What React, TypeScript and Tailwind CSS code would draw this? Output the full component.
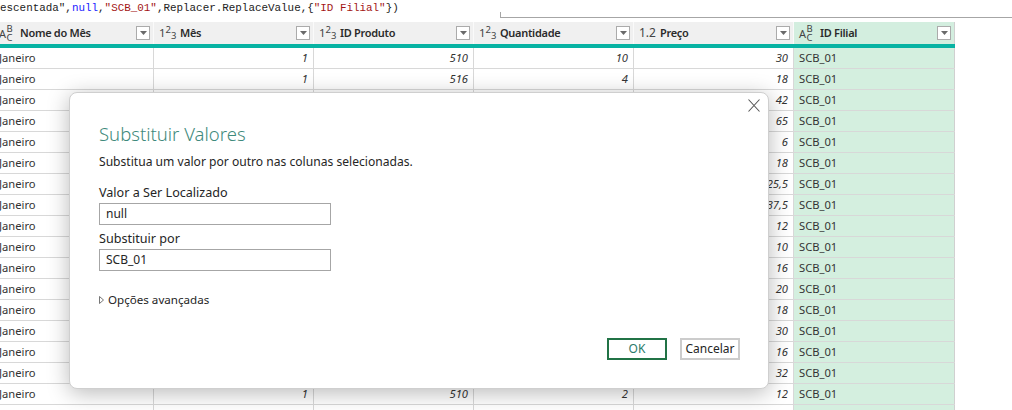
import React from "react";

const rows: string[][] = [
  ["1", "510", "10", "30"],
  ["1", "516", "4", "18"],
  ["1", "512", "6", "42"],
  ["1", "515", "5", "65"],
  ["1", "511", "3", "6"],
  ["1", "516", "4", "18"],
  ["1", "514", "3", "25,5"],
  ["1", "513", "5", "37,5"],
  ["1", "517", "2", "12"],
  ["1", "518", "1", "10"],
  ["1", "510", "2", "16"],
  ["1", "519", "4", "20"],
  ["1", "516", "4", "18"],
  ["1", "511", "3", "30"],
  ["1", "510", "2", "16"],
  ["1", "512", "4", "32"],
  ["1", "510", "2", "12"],
  ["", "", "", ""],
];

function Drop() {
  return (
    <div className="w-[14px] h-[14px] border border-[#ababab] bg-white flex items-center justify-center shrink-0">
      <svg width="7" height="4" viewBox="0 0 7 4">
        <path d="M0 0 L7 0 L3.5 4 Z" fill="#6a6a6a" />
      </svg>
    </div>
  );
}

function IconABC() {
  return (
    <span className="flex items-center w-[18px] text-[#444] leading-none">
      <span className="text-[11px] mt-[1px]">A</span>
      <span className="flex flex-col text-[9.5px] leading-[9px] ml-[0.5px]">
        <span>B</span>
        <span>C</span>
      </span>
    </span>
  );
}

function Icon123() {
  return (
    <span className="flex items-center w-[18px] text-[#444] leading-none text-[11.5px]">
      <span>1</span>
      <span className="text-[9.5px] -mt-[6px]">2</span>
      <span className="text-[9.5px] mt-[5px]">3</span>
    </span>
  );
}

function Icon12() {
  return <span className="flex items-center w-[18px] text-[#444] text-[12px] leading-none">1.2</span>;
}

function HeaderCell({ icon, label, green }: { icon: React.ReactNode; label: string; green?: boolean }) {
  return (
    <div
      className={
        green
          ? "w-[161px] h-[22px] flex items-center bg-[#d3eedf] border-r border-[#d0d0d0] pl-[5px] pr-[3px]"
          : "w-[160px] h-[22px] flex items-center bg-[#f0f0f0] border-r border-[#fafafa] pl-[5px] pr-[3px]"
      }
    >
      {icon}
      <span className="ml-[3px] flex-1 text-[11px] tracking-[-0.3px] font-semibold text-[#2b2b2b]">{label}</span>
      <Drop />
    </div>
  );
}

function NumCell({ v }: { v: string }) {
  return (
    <div className="w-[160px] h-full border-r border-[#d8d8d8] flex items-center justify-end pr-[5px] italic text-[#333]">
      {v}
    </div>
  );
}

export default function App() {
  return (
    <div
      className="relative w-[1012px] h-[410px] overflow-hidden bg-white text-[11.2px] text-[#333]"
      style={{ fontFamily: '"Noto Sans", "Open Sans", sans-serif' }}
    >
      {/* formula bar */}
      <div className="h-[22px] flex">
        <div
          className="w-[500px] h-[17px] text-[10.9px] leading-[16px] whitespace-nowrap text-[#222]"
          style={{ fontFamily: '"Liberation Mono", "DejaVu Sans Mono", monospace' }}
        >
          escentada",<span className="text-[#1a1aff]">null</span>,<span className="text-[#a31515]">"SCB_01"</span>,Replacer.ReplaceValue,{"{"}
          <span className="text-[#a31515]">"ID Filial"</span>{"})"}
        </div>
        <div className="flex-1 mt-[12px] h-[6px] border-l border-b border-[#a6a6a6]" />
      </div>

      {/* table */}
      <div className="ml-[-6px]">
        <div className="flex">
          <HeaderCell icon={<IconABC />} label="Nome do Mês" />
          <HeaderCell icon={<Icon123 />} label="Mês" />
          <HeaderCell icon={<Icon123 />} label="ID Produto" />
          <HeaderCell icon={<Icon123 />} label="Quantidade" />
          <HeaderCell icon={<Icon12 />} label="Preço" />
          <HeaderCell icon={<IconABC />} label="ID Filial" green />
        </div>
        <div className="w-[961px] h-[4px] bg-[#07b3a3]" />
        {rows.map((r, i) => (
          <div key={i} className="flex h-[21px] border-b border-[#d8d8d8] w-[961px]">
            <div className="w-[160px] h-full border-r border-[#d8d8d8] flex items-center pl-[5px]">
              {r[0] !== "" ? "Janeiro" : ""}
            </div>
            <NumCell v={r[0]} />
            <NumCell v={r[1]} />
            <NumCell v={r[2]} />
            <NumCell v={r[3]} />
            <div className="w-[161px] h-full bg-[#d4efdf] border-r border-[#d0d0d0] flex items-center pl-[5px]">
              {r[0] !== "" ? "SCB_01" : ""}
            </div>
          </div>
        ))}
      </div>

      {/* dialog */}
      <div className="absolute left-[69px] top-[92px] w-[700px] h-[297px] bg-white rounded-[8px] border border-[#cfcfcf] shadow-[0_4px_22px_rgba(0,0,0,0.28)]">
        <svg className="absolute left-[678px] top-[6px]" width="12" height="13" viewBox="0 0 12 13">
          <path d="M0.5 0.5 L11.5 12.5 M11.5 0.5 L0.5 12.5" stroke="#555" strokeWidth="1.1" fill="none" />
        </svg>
        <div className="pl-[29px] pt-[27px] flex flex-col">
          <div className="h-[28px] text-[18.5px] leading-[28px] font-light text-[#3f8a7c]">Substituir Valores</div>
          <div className="mt-[5px] h-[18px] leading-[18px] text-[12.1px] text-[#252525]">
            Substitua um valor por outro nas colunas selecionadas.
          </div>
          <div className="mt-[13px] h-[18px] leading-[18px] text-[12.6px] text-[#252525]">Valor a Ser Localizado</div>
          <div className="mt-[1px] w-[232px] h-[22px] border border-[#a6a6a6] flex items-center pl-[6px] text-[12px] text-[#252525]">
            null
          </div>
          <div className="mt-[5px] h-[18px] leading-[18px] text-[12.6px] text-[#252525]">Substituir por</div>
          <div className="mt-[1px] w-[232px] h-[22px] border border-[#a6a6a6] flex items-center pl-[6px] text-[12px] text-[#252525]">
            SCB_01
          </div>
          <div className="mt-[20px] h-[18px] flex items-center text-[11.6px] text-[#252525]">
            <svg width="5" height="8" viewBox="0 0 5 8" className="mr-[4px]">
              <path d="M0.5 0.5 L4.5 4 L0.5 7.5 Z" fill="none" stroke="#666" strokeWidth="0.9" />
            </svg>
            Opções avançadas
          </div>
        </div>
        <div className="absolute left-[537px] top-[245px] flex gap-[13px]">
          <div className="w-[60px] h-[22px] border-2 border-[#217346] flex items-center justify-center text-[12px] text-[#2b7a6a]">
            OK
          </div>
          <div className="w-[60px] h-[22px] border-2 border-[#cccccc] flex items-center justify-center text-[12px] text-[#252525]">
            Cancelar
          </div>
        </div>
      </div>
    </div>
  );
}
